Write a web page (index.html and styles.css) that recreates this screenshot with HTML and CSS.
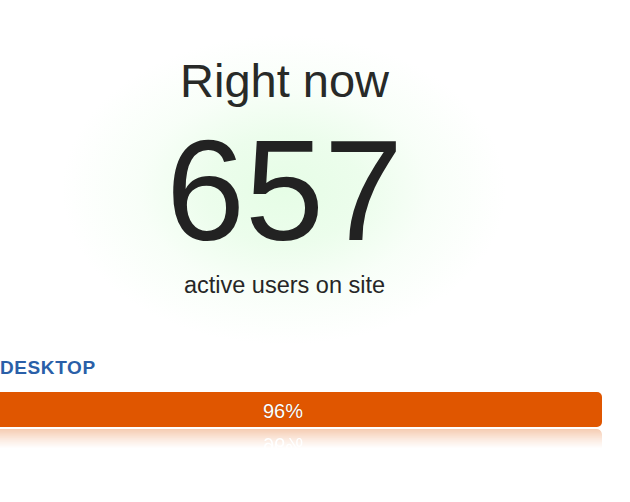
FILE: index.html
```html
<!DOCTYPE html>
<html lang="en">
<head>
<meta charset="utf-8">
<title>Right now</title>
<link rel="stylesheet" href="styles.css">
</head>
<body>
<div class="panel">
  <section class="hero">
    <h1 class="title">Right now</h1>
    <div class="count">657</div>
    <p class="caption">active users on site</p>
  </section>
  <section class="device">
    <h2 class="device-label">DESKTOP</h2>
    <div class="bar"><span class="bar-text">96%</span></div>
    <div class="bar bar-reflection" aria-hidden="true"><span class="bar-text">96%</span></div>
  </section>
</div>
</body>
</html>
```
FILE: styles.css
```css
html, body {
  margin: 0;
  padding: 0;
  background: #ffffff;
  overflow: hidden;
}
body {
  font-family: "Liberation Sans", Arial, sans-serif;
  color: #262626;
}
.panel {
  width: 569px;
}
.hero {
  display: flex;
  flex-direction: column;
  align-items: center;
  padding-top: 58px;
  height: 300px;
  background: radial-gradient(ellipse 222px 155px at 284px 190px,
    #e6fde6 0%, rgba(234, 253, 234, 0.9) 35%, rgba(243, 254, 243, 0.6) 65%, rgba(255, 255, 255, 0) 100%);
}
.title {
  margin: 0;
  font-size: 47px;
  line-height: 46px;
  font-weight: normal;
  color: #282a28;
}
.count {
  margin-top: 16px;
  font-size: 142px;
  line-height: 142px;
  color: #222222;
}
.caption {
  margin: 11px 0 0;
  font-size: 23.5px;
  line-height: 24px;
  color: #262626;
}
.device {
  padding-top: 1px;
}
.device-label {
  margin: 0;
  font-size: 19px;
  line-height: 18px;
  font-weight: bold;
  letter-spacing: 0.6px;
  color: #2a5fa8;
}
.bar {
  margin-top: 15px;
  margin-left: -36px;
  width: 638px;
  height: 35px;
  background: #e05600;
  border-radius: 0 5px 5px 0;
  display: flex;
  align-items: center;
  justify-content: center;
}
.bar-reflection {
  margin-top: 2px;
  border-radius: 0 0 5px 0;
  border-radius: 0 5px 5px 0;
  transform: scaleY(-1);
  -webkit-mask-image: linear-gradient(to top, rgba(0, 0, 0, 0.3) 0%, rgba(0, 0, 0, 0.12) 30%, rgba(0, 0, 0, 0) 55%);
  mask-image: linear-gradient(to top, rgba(0, 0, 0, 0.3) 0%, rgba(0, 0, 0, 0.12) 30%, rgba(0, 0, 0, 0) 55%);
}
.bar-text {
  font-size: 20px;
  line-height: 20px;
  padding-top: 2px;
  color: #ffffff;
  text-shadow: 0 0 1px rgba(0, 0, 0, 0.35);
}
```
